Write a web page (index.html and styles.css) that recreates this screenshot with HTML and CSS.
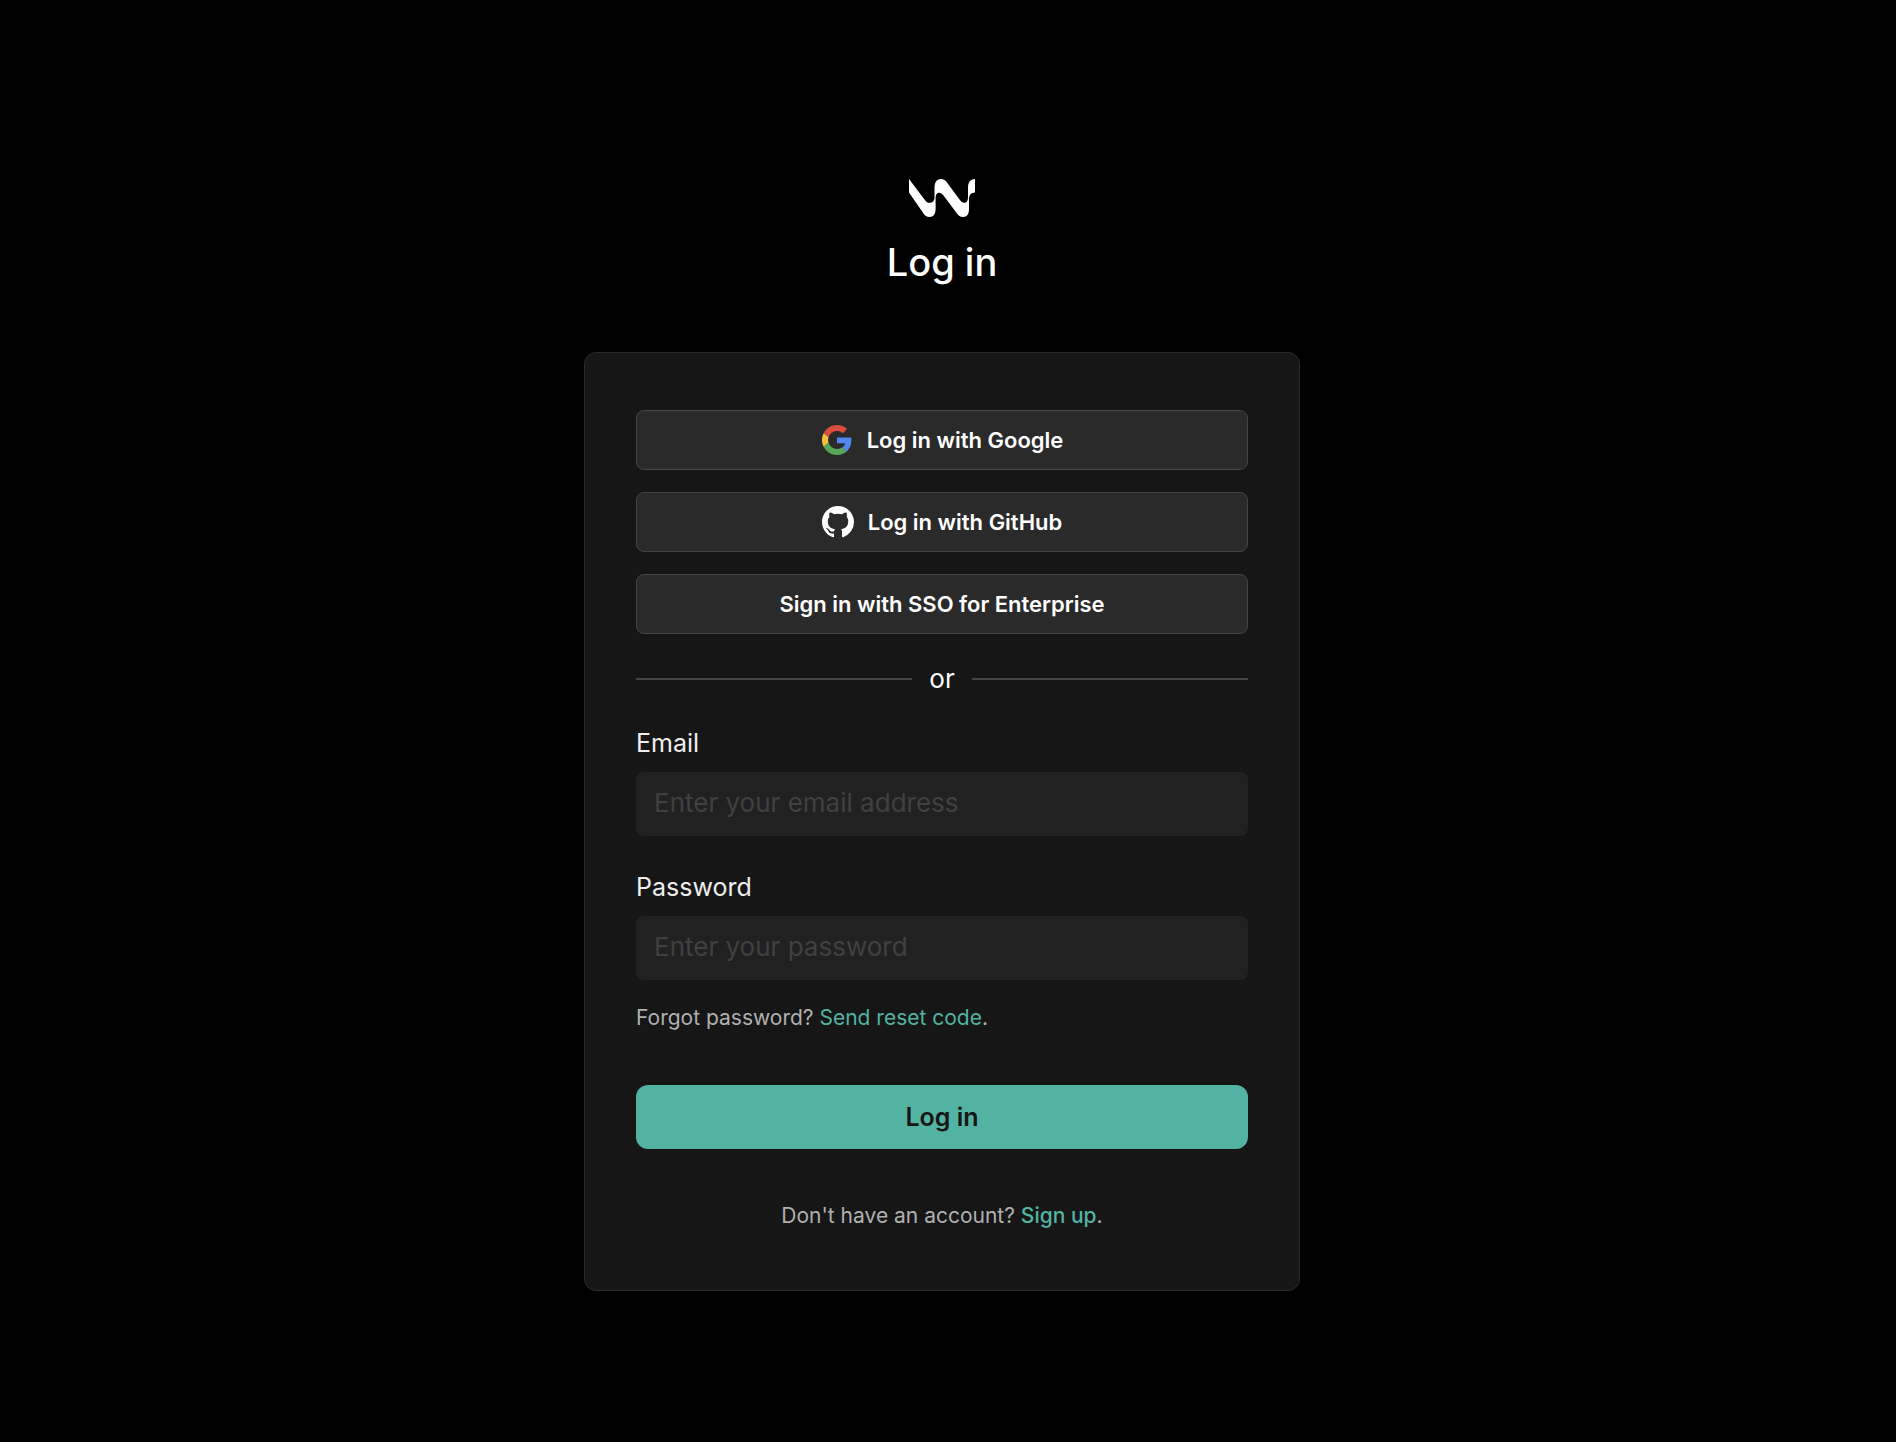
FILE: index.html
```html
<!DOCTYPE html>
<html lang="en">
  <head>
    <meta charset="UTF-8" />
    <meta name="viewport" content="width=device-width, initial-scale=1.0" />
    <title>Log in</title>
    <link rel="stylesheet" href="styles.css">
  </head>
  <body>
    <main class="page">
      <header class="header">
        <svg class="logo" viewBox="0 0 66 38" fill="currentColor" aria-hidden="true">
          <path d="M0 0L15.500 20.500C18 23.800 19.500 24 21.500 23.700C25 23.200 25.500 20.500 25.500 17.500V9C25.500 3.500 27.500 0 32 0C34.500 0 36.500 1.500 38 3.500L50.500 20.500C52.500 23.300 54 24 56 23.700C58.500 23.300 59 20.500 59 17.500V9C59 3.500 61 0.300 66 0V13.500C62 13.700 60 16 60 20V30C60 35 58 38 54 38C51 38 49.500 36.500 48 34.500L34.500 16.500C33 14.500 31.500 13.700 30 13.700C27.500 13.700 26.600 16 26.600 20V30C26.600 35 24.500 38 20.500 38C17.500 38 16 36.500 14.500 34.500L0 13.500Z" />
        </svg>
        <h1 class="title">Log in</h1>
      </header>

      <div class="card">
        <div class="providers">
          <button type="button" class="btn-provider">
            <svg class="icon" viewBox="0 0 48 48" aria-hidden="true">
              <g transform="translate(1.500 1.500) scale(0.9375)">
                <path fill="#db4e3f" d="M24 9.500c3.540 0 6.710 1.220 9.210 3.600l6.850-6.850C35.900 2.380 30.470 0 24 0 14.620 0 6.510 5.380 2.560 13.220l7.980 6.190C12.430 13.720 17.740 9.500 24 9.500z" />
                <path fill="#5086ee" d="M46.980 24.550c0-1.570-.150-3.090-.380-4.550H24v9.020h12.940c-.580 2.960-2.260 5.480-4.780 7.180l7.730 6c4.510-4.180 7.090-10.360 7.090-17.650z" />
                <path fill="#f2bf42" d="M10.530 28.590c-.480-1.450-.760-2.990-.760-4.590s.270-3.140.760-4.590l-7.980-6.190C.920 16.460 0 20.120 0 24c0 3.880.920 7.540 2.560 10.780l7.970-6.190z" />
                <path fill="#57a65a" d="M24 48c6.480 0 11.930-2.130 15.890-5.810l-7.730-6c-2.150 1.450-4.920 2.300-8.160 2.300-6.260 0-11.570-4.220-13.470-9.910l-7.980 6.190C6.510 42.620 14.620 48 24 48z" />
              </g>
            </svg>
            Log in with Google
          </button>
          <button type="button" class="btn-provider">
            <svg class="icon" viewBox="0 0 16 16" fill="currentColor" aria-hidden="true">
              <path d="M8 0C3.580 0 0 3.580 0 8c0 3.540 2.290 6.530 5.470 7.590.4.070.55-.17.55-.38 0-.19-.01-.82-.01-1.490-2.010.37-2.530-.49-2.690-.94-.09-.23-.48-.94-.82-1.130-.28-.15-.68-.52-.01-.53.63-.01 1.080.58 1.230.82.72 1.210 1.870.87 2.330.66.07-.52.28-.87.51-1.070-1.780-.2-3.640-.89-3.640-3.950 0-.87.31-1.590.82-2.150-.08-.2-.36-1.020.08-2.120 0 0 .67-.21 2.200.82.64-.18 1.320-.27 2-.27s1.360.09 2 .27c1.530-1.040 2.200-.82 2.200-.82.44 1.100.16 1.920.08 2.120.51.56.82 1.270.82 2.150 0 3.070-1.870 3.750-3.650 3.950.29.25.54.73.54 1.480 0 1.070-.01 1.930-.01 2.200 0 .21.15.46.55.38A8.010 8.010 0 0 0 16 8c0-4.420-3.580-8-8-8z" />
            </svg>
            Log in with GitHub
          </button>
          <button type="button" class="btn-provider">Sign in with SSO for Enterprise</button>
        </div>

        <div class="divider">or</div>

        <form class="form">
          <div class="field">
            <label for="email">Email</label>
            <input id="email" type="email" placeholder="Enter your email address" />
          </div>
          <div class="field">
            <label for="password">Password</label>
            <input id="password" type="password" placeholder="Enter your password" />
          </div>
          <p class="note">Forgot password? <a href="#reset">Send reset code</a>.</p>
          <button type="submit" class="btn-submit">Log in</button>
        </form>

        <p class="note signup">Don't have an account? <a href="#signup">Sign up</a>.</p>
      </div>
    </main>
  </body>
</html>
```
FILE: styles.css
```css
* {
  box-sizing: border-box;
}
body {
  margin: 0;
  background-color: #000;
  color: #fff;
  font-family: Inter, "Liberation Sans", sans-serif;
  font-size: 26px;
  line-height: 32px;
  -webkit-font-smoothing: antialiased;
}
button,
input {
  font-family: inherit;
}
.page {
  display: flex;
  flex-direction: column;
  align-items: center;
  gap: 66px;
  padding: 179px 12px 80px 0;
}
.header {
  display: flex;
  flex-direction: column;
  align-items: center;
  gap: 21px;
}
.logo {
  width: 66px;
  height: 38px;
}
.title {
  margin: 0;
  font-size: 38px;
  font-weight: 500;
  line-height: 48px;
}
.card {
  width: 100%;
  max-width: 716px;
  padding: 57px 51px 60px;
  border: 1px solid #2a2a2a;
  border-radius: 12px;
  background-color: #161616;
}
.providers {
  display: flex;
  flex-direction: column;
  gap: 22px;
}
.btn-provider {
  display: flex;
  align-items: center;
  justify-content: center;
  gap: 14px;
  height: 60px;
  border: 1px solid #444;
  border-radius: 8px;
  background-color: #2a2a2a;
  color: #fff;
  font-size: 22px;
  font-weight: 600;
  cursor: pointer;
}
.icon {
  width: 32px;
  height: 32px;
}
.divider {
  display: flex;
  align-items: center;
  gap: 17px;
  margin: 29px 0 32px;
}
.divider::before,
.divider::after {
  content: "";
  flex: 1;
  height: 2px;
  background-color: #444;
}
.form {
  display: flex;
  flex-direction: column;
}
.field {
  display: flex;
  flex-direction: column;
  gap: 13px;
}
.field + .field {
  margin-top: 35px;
}
.field label {
  color: #eee;
  font-size: 25px;
}
.field input {
  width: 100%;
  height: 64px;
  padding: 0 18px 3px;
  border: none;
  border-radius: 8px;
  background-color: #212121;
  color: #eee;
  font-size: 26px;
}
.field input::placeholder {
  color: #404040;
}
.note {
  margin: 24px 0 0;
  color: #b0b0b0;
  font-size: 21px;
  line-height: 28px;
}
.note a {
  color: #53b3a2;
  text-decoration: none;
}
.btn-submit {
  height: 64px;
  margin-top: 53px;
  border: none;
  border-radius: 12px;
  background-color: #53b3a2;
  color: #161616;
  font-size: 25px;
  font-weight: 600;
  cursor: pointer;
}
.signup {
  margin-top: 53px;
  text-align: center;
}
.signup a {
  font-weight: 500;
}
```
